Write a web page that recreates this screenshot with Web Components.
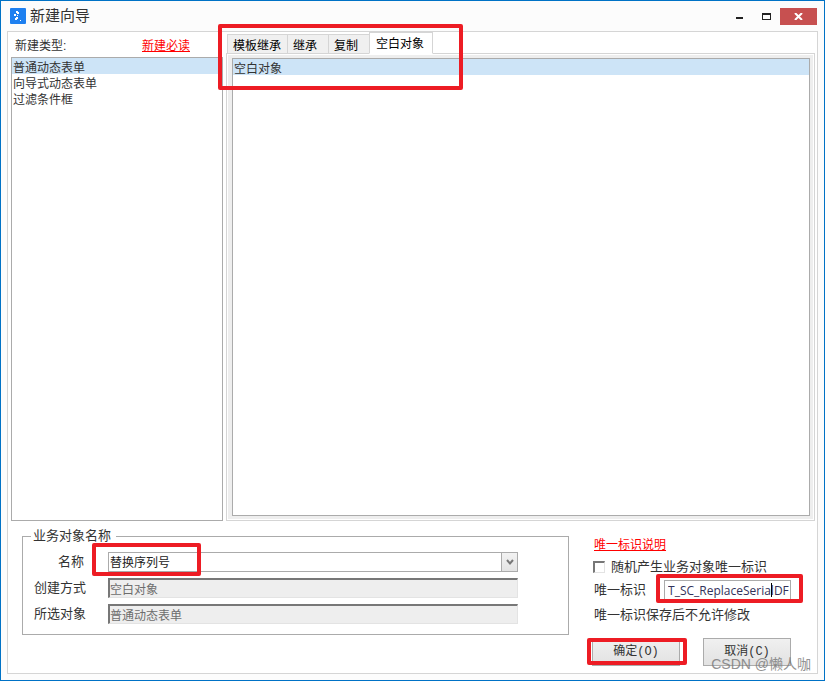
<!DOCTYPE html>
<html lang="zh-CN">
<head>
<meta charset="utf-8">
<title>新建向导</title>
<style>
html,body{margin:0;height:100%}
body{font:12px/16px "Liberation Sans","Noto Sans CJK SC",sans-serif;color:#333;--line:#ababab;--soft:#d5d5d5;--pick:#cde4f7}
</style>
</head>
<body>
<wizard-window></wizard-window>
<script>
const define = (name, html, init) => customElements.define(name, class extends HTMLElement {
  connectedCallback() {
    if (this.shadowRoot) return;
    const root = this.attachShadow({ mode: "open" });
    const t = document.createElement("template");
    t.innerHTML = "<style>*{box-sizing:border-box}:host{box-sizing:border-box}button,input,select{font:inherit;color:inherit}</style>" + html;
    root.append(t.content.cloneNode(true));
    if (init) init(root, this);
  }
});

/* Red highlight frame laid over the control it wraps */
define("mark-frame", `
<style>:host{display:block;position:absolute;border:4px solid #ed1c24;border-radius:2px;pointer-events:none;z-index:5}</style>`);

define("title-bar", `
<style>
:host{display:flex;align-items:center;height:30px;padding:0 7px 0 9px;flex:none}
h1{font-size:15px;line-height:20px;font-weight:400;margin:0 auto 0 4px}
button{border:0;background:none;padding:0;height:17px;width:27px;display:grid;place-items:center}
.close{background:#c75050;width:37px}
svg{display:block}
</style>
<svg width="16" height="16" viewBox="0 0 16 16"><rect width="16" height="16" rx="1" fill="#1e80f0"/><g fill="#fff"><path d="M6 3h2v1h1v2H7V5H6z"/><path d="M4 6h2v2H4zM5 10h1V9h2v2H7v1H5z"/><path d="M10 12h1v1h-1zM7 7h1v1H7z"/></g></svg>
<h1><slot></slot></h1>
<button type="button" aria-label="最小化"><svg width="9" height="8"><path fill="#222" d="M1 5h7v2H1z"/></svg></button>
<button type="button" aria-label="最大化"><svg width="9" height="7"><path fill="#222" fill-rule="evenodd" d="M0 0h9v7H0zM1 2v4h7V2z"/></svg></button>
<button type="button" class="close" aria-label="关闭"><svg width="9" height="7" viewBox="0 0 9 7"><path d="M1 0l7 7M8 0L1 7" stroke="#fff" stroke-width="2"/></svg></button>`);

define("choice-list", `
<style>
:host{display:flex;flex:1;border:1px solid var(--line);background:#fff;min-height:0}
ul{list-style:none;margin:0;padding:0;flex:1}
li{height:16px;padding:0 1px;line-height:20px;white-space:nowrap}
li[aria-selected=true]{background:var(--pick)}
</style><ul role="listbox"></ul>`, (root, host) => {
  const ul = root.querySelector("ul");
  ul.setAttribute("aria-label", host.getAttribute("label"));
  host.getAttribute("items").split("|").forEach((text, i) => {
    const li = document.createElement("li");
    li.setAttribute("role", "option");
    li.setAttribute("aria-selected", i === 0);
    li.textContent = text;
    ul.append(li);
  });
});

define("type-pane", `
<style>
:host{display:flex;flex-direction:column;padding-left:3px;min-height:0}
header{display:flex;justify-content:space-between;align-items:center;height:25px;padding:2px 33px 0 4px}
a{color:#f00}
</style>
<header><span>新建类型:</span><a href="#read">新建必读</a></header>
<choice-list label="新建类型" items="普通动态表单|向导式动态表单|过滤条件框"></choice-list>`);

define("tab-pane", `
<style>
:host{display:flex;flex-direction:column;position:relative;min-height:0;padding-right:2px}
nav{display:flex;align-items:flex-end;height:22px;padding-left:1px;margin-bottom:-1px;position:relative;z-index:1;color:#000}
button{height:20px;border:1px solid var(--soft);border-right:0;background:#f0f0f0;padding:2px 6px 0 5px;line-height:18px;white-space:nowrap}
.mid{padding-right:11px}
[aria-selected=true]{height:22px;background:#fff;border-right:1px solid var(--soft);border-bottom-color:#fff;padding:1px 8px 0 6px}
.panel{flex:1;display:flex;min-height:0;border:1px solid var(--soft);background:#fff;padding:1px}
.inner{flex:1;display:flex;background:#eee;padding:3px 3px 3px 4px}
mark-frame{left:-8px;top:-8px;width:245px;height:66px}
</style>
<nav role="tablist">
<button type="button" role="tab">模板继承</button><button type="button" role="tab" class="mid">继承</button><button type="button" role="tab" class="mid">复制</button><button type="button" role="tab" aria-selected="true">空白对象</button>
</nav>
<div class="panel" role="tabpanel"><div class="inner"><choice-list label="空白对象" items="空白对象"></choice-list></div></div>
<mark-frame></mark-frame>`);

define("text-field", `
<style>
:host{display:grid;grid-template-columns:63px 1fr;column-gap:22px;align-items:center;position:relative;height:20px}
label{text-align:right;font-size:13px;padding-left:10px;white-space:nowrap}
input{width:100%;height:20px;border:1px solid #e3e3e3;border-top:2px solid #777;border-left:2px solid #777;background:#eee;color:#6d6d6d;padding:0;border-radius:0}
</style><label for="f"></label><input id="f" disabled>`, (root, host) => {
  root.querySelector("label").textContent = host.getAttribute("label");
  root.querySelector("input").value = host.getAttribute("value");
});

define("combo-field", `
<style>
:host{display:grid;grid-template-columns:63px 1fr;column-gap:22px;align-items:center;position:relative;height:20px}
label{text-align:right;font-size:13px;padding-right:2px}
.box{position:relative;display:flex}
select{appearance:none;width:100%;height:20px;border:1px solid var(--line);background:#fff;color:#222;padding:2px 18px 0 1px;border-radius:0}
.arrow{position:absolute;right:0;top:0;width:17px;height:20px;border:1px solid var(--line);background:linear-gradient(#f2f2f2,#e3e3e3);display:grid;place-items:center;pointer-events:none}
mark-frame{left:69px;top:-9px;width:109px;height:33px}
</style>
<label for="n">名称</label>
<div class="box"><select id="n"><option>替换序列号</option></select><span class="arrow"><svg width="8" height="7" viewBox="0 0 8 7"><path d="M1 1l3 3.5L7 1" fill="none" stroke="#777" stroke-width="2"/></svg></span></div>
<mark-frame></mark-frame>`);

define("object-group", `
<style>
:host{display:block}
fieldset{margin:0;padding:9px 50px 10px 0;border:1px solid var(--line);display:grid;gap:6px;min-width:0}
legend{font-size:13px;line-height:14px;padding:0 5px 0 2px;margin-left:8px}
</style>
<fieldset><legend>业务对象名称</legend>
<combo-field></combo-field>
<text-field label="创建方式" value="空白对象"></text-field>
<text-field label="所选对象" value="普通动态表单"></text-field>
</fieldset>`);

define("push-button", `
<style>
:host{display:block;position:relative}
button{width:88px;height:28px;border:1px solid var(--line);background:linear-gradient(#f0f0f0,#e2e2e2);border-radius:0;padding:0;font:12px/16px "Liberation Mono","Noto Sans CJK SC",monospace}
mark-frame{left:-5px;top:0;width:100px;height:27px}
mark-frame[hidden]{display:none}
</style><button type="button"><slot></slot></button><mark-frame hidden></mark-frame>`, (root, host) => {
  root.querySelector("mark-frame").hidden = !host.hasAttribute("marked");
});

define("identity-form", `
<style>
:host{display:flex;flex-direction:column;align-items:flex-start;font-size:13px;white-space:nowrap}
a{color:#f00;font-size:12px;margin-bottom:5px}
.check{display:flex;align-items:center;gap:6px;height:18px;margin:0 0 3px -1px}
.check input{appearance:none;width:12px;height:12px;margin:0;border:1px solid #e3e3e3;border-top:2px solid #777;border-left:2px solid #777;background:#fff}
.id{display:flex;align-items:center;gap:18px;height:22px}
.box{position:relative}
.id input{display:block;width:127px;height:20px;border:1px solid var(--line);border-radius:0;padding:0 0 0 3px;font:12px/18px "Open Sans",sans-serif;color:#32325a}
.caret{position:absolute;left:107px;top:3px;width:1px;height:14px;background:#000}
mark-frame{left:-8px;top:-6px;width:147px;height:29px}
p{margin:6px 0 15px}
.buttons{display:flex;gap:23px;margin-left:-2px}
</style>
<a href="#id">唯一标识说明</a>
<div class="check"><input type="checkbox" id="r"><label for="r">随机产生业务对象唯一标识</label></div>
<div class="id"><label for="i">唯一标识</label><div class="box"><input id="i" value="T_SC_ReplaceSerialDF" spellcheck="false"><span class="caret"></span><mark-frame></mark-frame></div></div>
<p>唯一标识保存后不允许修改</p>
<div class="buttons"><push-button marked>确定(O)</push-button><push-button>取消(C)</push-button></div>`);

define("wizard-window", `
<style>
:host{display:flex;flex-direction:column;min-height:100vh;border:1px solid #0072c6;background:#fcfcfc;position:relative}
main{flex:1;display:flex;flex-direction:column;margin:0 6px 6px;border:1px solid var(--soft);background:#fff}
.panes{flex:1;display:grid;grid-template-columns:215px 1fr;gap:3px;min-height:300px}
.foot{display:grid;grid-template-columns:1fr 223px;gap:25px;padding:8px 0 7px 14px}
object-group{align-self:start}
identity-form{padding-top:8px}
.watermark{position:absolute;right:13px;bottom:7px;font-size:14px;line-height:18px;color:#777;opacity:.8;z-index:6;pointer-events:none}
</style>
<title-bar>新建向导</title-bar>
<main>
<div class="panes"><type-pane></type-pane><tab-pane></tab-pane></div>
<div class="foot"><object-group></object-group><identity-form></identity-form></div>
</main>
<span class="watermark">CSDN @懒人咖</span>`);
</script>
</body>
</html>
